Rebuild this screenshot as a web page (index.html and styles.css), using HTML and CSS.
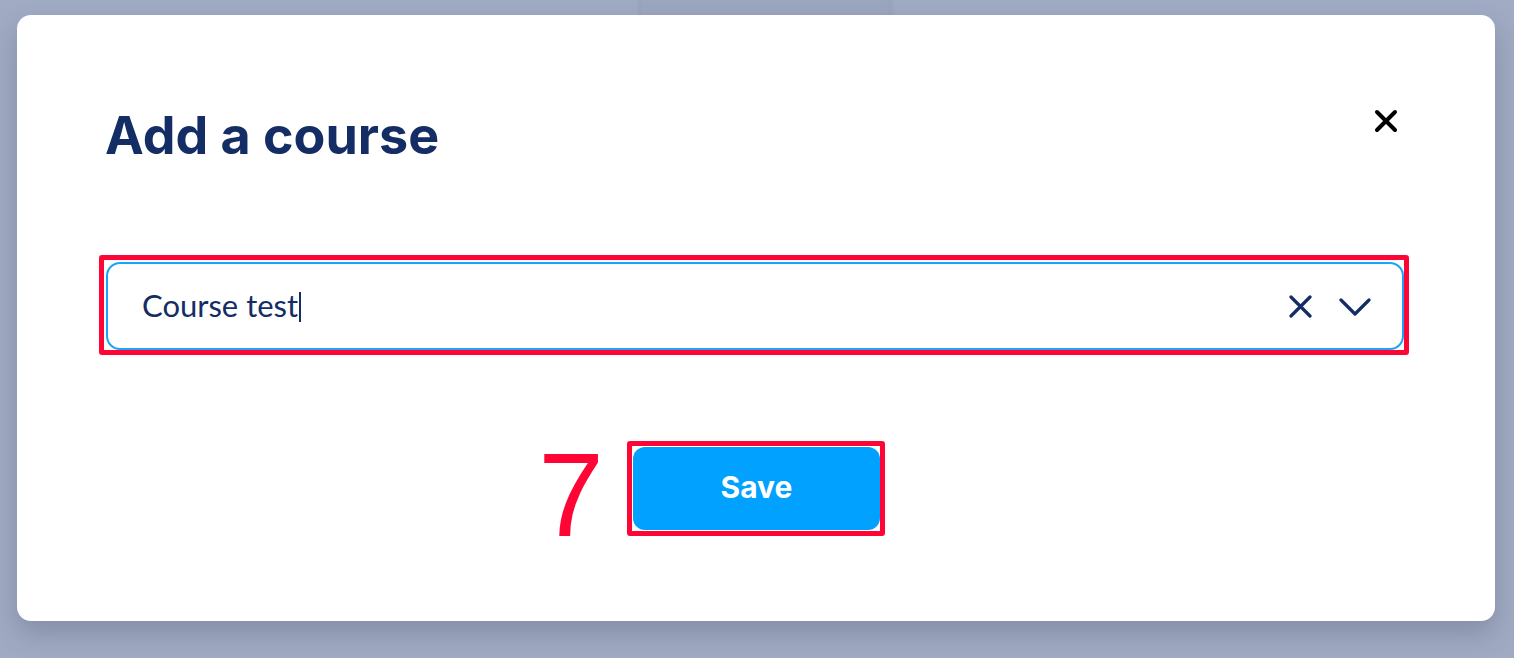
FILE: index.html
```html
<!DOCTYPE html>
<html lang="en">
<head>
<meta charset="utf-8">
<title>Add a course</title>
<link rel="stylesheet" href="styles.css">
</head>
<body>
<div class="backdrop">
  <div class="modal">
    <div class="modal-head">
      <h1 class="title">Add a course</h1>
      <button class="close" aria-label="Close">
        <svg width="24" height="24" viewBox="0 0 24 24"><path d="M3 3L21 21M21 3L3 21" stroke="#000" stroke-width="4" stroke-linecap="round"/></svg>
      </button>
    </div>
    <div class="mark mark-input">
      <div class="select">
        <span class="value">Course test</span><span class="caret"></span>
        <div class="indicators">
          <svg width="24" height="24" viewBox="0 0 24 24"><path d="M2 2L21 21M21 2L2 21" stroke="#142d64" stroke-width="3.2" stroke-linecap="round"/></svg>
          <svg width="32" height="20" viewBox="0 0 32 20"><path d="M2 3L16 17L30 3" fill="none" stroke="#142d64" stroke-width="3.2" stroke-linecap="round" stroke-linejoin="round"/></svg>
        </div>
      </div>
    </div>
    <div class="actions">
      <div class="mark mark-save">
        <span class="step">7</span>
        <button class="save">Save</button>
      </div>
    </div>
  </div>
</div>
</body>
</html>
```
FILE: styles.css
```css
html, body {
  margin: 0;
  padding: 0;
}
body {
  width: 1514px;
  height: 658px;
  overflow: hidden;
  background-color: #a0aac2;
  background-image: linear-gradient(90deg, #a1abc4 0, #a1abc4 636px, #98a3bc 640px, #9ca7bf 644px, #9ca7bf 886px, #98a3bc 890px, #a1abc4 896px, #a1abc4 100%);
  background-size: 100% 30px;
  background-repeat: no-repeat;
  font-family: Inter, "Liberation Sans", sans-serif;
}
.backdrop {
  padding: 15px 19px 0 17px;
}
.modal {
  background: #fff;
  border-radius: 14px;
  box-shadow: 0 12px 26px rgba(60, 70, 95, 0.28);
  padding: 91px 86px 85px 82px;
  height: 606px;
  box-sizing: border-box;
}
.modal-head {
  display: flex;
  justify-content: space-between;
  align-items: flex-start;
  padding-left: 6px;
}
.title {
  margin: 0;
  font-size: 52px;
  line-height: 60px;
  font-weight: 700;
  color: #142d64;
  letter-spacing: 0;
}
.close {
  border: 0;
  background: none;
  padding: 0;
  margin: 3px 11px 0 0;
  width: 24px;
  height: 24px;
  cursor: pointer;
}
.mark {
  border: 5px solid #ff0536;
  border-radius: 3px;
}
.mark-input {
  margin-top: 89px;
  padding: 2px 0 0 2px;
  height: 100px;
  box-sizing: border-box;
}
.select {
  height: 88px;
  box-sizing: border-box;
  border: 2px solid #1aa3f7;
  border-radius: 14px;
  display: flex;
  align-items: center;
  padding: 0 31px 0 34px;
  font-family: Lato, "Noto Sans", sans-serif;
  font-size: 31px;
  color: #142d64;
}
.value {
  margin-top: -3px;
}
.caret {
  width: 2px;
  height: 30px;
  background: #142d64;
  margin-left: 1px;
  margin-top: 2px;
}
.indicators {
  margin-left: auto;
  display: flex;
  align-items: center;
  gap: 26px;
  margin-top: 2px;
}
.actions {
  margin-top: 86px;
  display: flex;
  justify-content: center;
  padding-left: 4px;
}
.mark-save {
  position: relative;
  padding: 1px 0 1px 1px;
  width: 258px;
  height: 95px;
  box-sizing: border-box;
}
.step {
  position: absolute;
  right: 100%;
  top: -9px;
  margin-right: 28px;
  font-family: "Liberation Sans", Arial, sans-serif;
  font-size: 118px;
  line-height: 116px;
  color: #ff0536;
}
.save {
  display: block;
  width: 247px;
  height: 83px;
  border: 0;
  border-radius: 12px;
  background: #00a1ff;
  color: #fff;
  font-family: Inter, "Liberation Sans", sans-serif;
  font-size: 30px;
  font-weight: 700;
  padding-bottom: 4px;
  cursor: pointer;
}
```
